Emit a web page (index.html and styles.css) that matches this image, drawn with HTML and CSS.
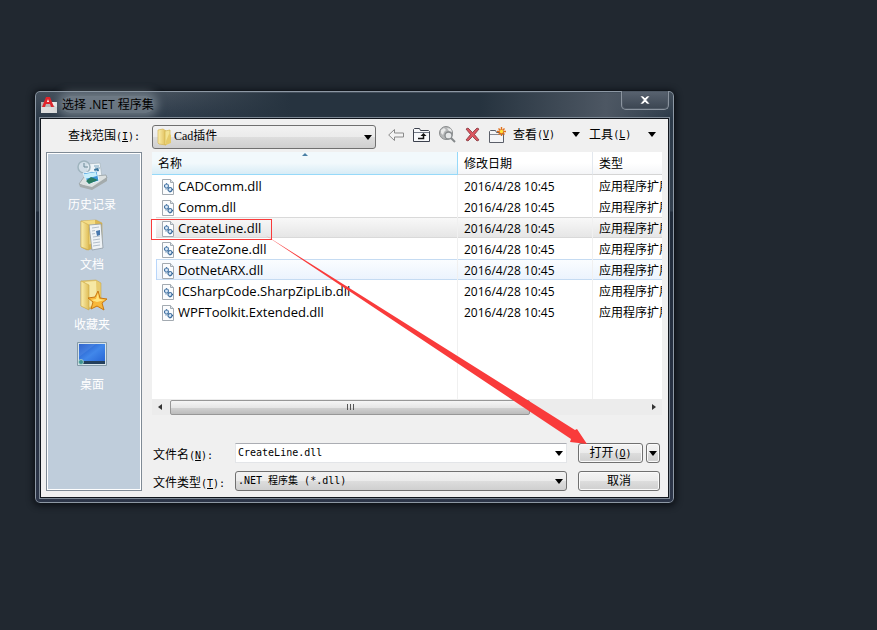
FILE: index.html
```html
<!DOCTYPE html>
<html lang="zh-CN">
<head>
  <meta charset="UTF-8" />
  <meta name="viewport" content="width=device-width, initial-scale=1.0"/>
  <title>选择 .NET 程序集</title>
  <link rel="stylesheet" href="styles.css">
</head>
<body>
  <!-- shared icons -->
  <svg class="defs" width="0" height="0" aria-hidden="true">
    <defs>
      <linearGradient id="folder-fill" x1="0" x2="1">
        <stop offset="0" stop-color="#fbefae"/>
        <stop offset="1" stop-color="#dfbd57"/>
      </linearGradient>
      <linearGradient id="screen-fill" x1="0" y1="0" x2="1" y2="1">
        <stop offset="0" stop-color="#1c4fc0"/>
        <stop offset="0.5" stop-color="#4187ea"/>
        <stop offset="1" stop-color="#2360d2"/>
      </linearGradient>
      <symbol id="dll" viewBox="0 0 14 16">
        <path d="M1.5 .5h8l3 3v12h-11z" fill="#fbfcfd" stroke="#a3aab1"/>
        <path d="M9.500 .5v3h3" fill="#dfe5ea" stroke="#a3abb2"/>
        <circle cx="5.500" cy="7" r="2" fill="#dbe9f8" stroke="#5b86b0" stroke-width="1.200"/>
        <circle cx="9" cy="10.500" r="2" fill="#dbe9f8" stroke="#41719f" stroke-width="1.200"/>
        <path d="M3 7h1M5.500 4.300v1M7 8.500l1 1M9 12.500v1M11 10.500h1M5 9.500v1" stroke="#2f6095"/>
      </symbol>
    </defs>
  </svg>

  <div class="dialog" role="dialog" aria-labelledby="dialog-title">
    <div class="titlebar">
      <svg width="16" height="16" viewBox="0 0 16 16">
        <path d="M0 5h16v11H0z" fill="#b9b9b9"/>
        <path d="M8 5h8v6z" fill="#f4f4f4"/>
        <path d="M0 10h16v6H0z" fill="#dedede"/>
        <path d="M1 10L5 0h4l4 10h-3l-1-3H5l-1 3z" fill="#e0242b"/>
        <path d="M6 5l1-3 1 3z" fill="#fff"/>
      </svg>
      <h1 id="dialog-title"><span>选择 .NET 程序集</span></h1>
      <button class="close" type="button" aria-label="关闭">
        <svg width="12" height="10" viewBox="0 0 12 10">
          <path d="M1 1h3l2 2 2-2h3L7.500 5 11 9H8L6 7 4 9H1l3.500-4z" fill="#fff" stroke="#454c57" stroke-width=".6"/>
        </svg>
      </button>
    </div>

    <form class="client">
      <div class="toolbar">
        <label for="look-in">查找范围<span class="latin">(<u>I</u>):</span></label>
        <div class="combo look-in">
          <svg width="16" height="18" viewBox="0 0 16 18">
            <path d="M1 2l5-1 3 2v14l-7-1-1-1z" fill="url(#folder-fill)" stroke="#d5b553" stroke-width=".7"/>
            <path d="M8 3l5-1v12l-5 3z" fill="#f3e392" stroke="#d3b650" stroke-width=".7"/>
            <path d="M12 6l2 1v8l-5 2v-4z" fill="#e6cb6a"/>
          </svg>
          <select id="look-in"><option>Cad插件</option></select>
        </div>
        <div class="tools">
          <button type="button" aria-label="后退">
            <svg width="16" height="14" viewBox="0 0 16 14"><path d="M.7 7L6.500 1.500V5h9v4h-9v3.500z" fill="#f4f4f4" stroke="#8b8b8b"/></svg>
          </button>
          <button type="button" aria-label="向上">
            <svg width="17" height="14" viewBox="0 0 17 14">
              <path d="M.5 13.500V1.500l1-1h5l1 2h8l1 1v10z" fill="#f7f8fa" stroke="#3c414d"/>
              <path d="M1 4.500h15" stroke="#747b88"/>
              <path d="M5 10.500h5.500V7" fill="none" stroke="#111" stroke-width="1.500"/>
              <path d="M7.500 8l3-3 3 3z" fill="#111"/>
            </svg>
          </button>
          <button type="button" aria-label="搜索 Web">
            <svg width="17" height="17" viewBox="0 0 17 17">
              <circle cx="7" cy="7" r="6.500" fill="#b5b7b8" stroke="#8a8d8e"/>
              <path d="M2 4l3-2 2 2-2 2-1 3-2-2zM8 2l4 1 1 3-3-1z" fill="#e9eaea"/>
              <circle cx="9.500" cy="9.500" r="3.500" fill="#e6e8e9" stroke="#85898b" stroke-width="1.300"/>
              <path d="M12 12l4 4" stroke="#85898b" stroke-width="2"/>
            </svg>
          </button>
          <button type="button" aria-label="删除">
            <svg width="15" height="15" viewBox="0 0 15 15"><path d="M1 2l2-1 4.500 4.500L12 1l2 1-4.500 5.500L14 13l-2 1-4.500-4.500L3 14l-2-1 4.500-5.500z" fill="#dc5660" stroke="#83343b" stroke-width=".8"/></svg>
          </button>
          <button type="button" aria-label="新建文件夹">
            <svg width="18" height="16" viewBox="0 0 18 16">
              <path d="M.5 15.500v-11l1-1h5l1 2h7v10z" fill="#f4f5f7" stroke="#5b5f69"/>
              <path d="M1 7.500h13" stroke="#878c96"/>
              <path d="M12.500 0v9M8 4.500h9M9.500 1.500l6 6M15.500 1.500l-6 6" stroke="#e0701c" stroke-width="1.400"/>
              <circle cx="12.500" cy="4.500" r="1.700" fill="#ffe53b"/>
            </svg>
          </button>
          <button class="menu" type="button">查看<span class="latin">(<u>V</u>)</span><i class="arrow"></i></button>
          <button class="menu" type="button">工具<span class="latin">(<u>L</u>)</span><i class="arrow"></i></button>
        </div>
      </div>

      <nav class="places">
        <a href="#history">
          <svg width="32" height="32" viewBox="0 0 32 32">
            <path d="M10 5l14-1 2 14-14 2z" fill="#eef4f8" stroke="#a8b6bf" stroke-width=".7"/>
            <path d="M18 7h5M19 9h5M18 11h5" stroke="#78a2bd"/>
            <path d="M18 10l4-1 1 3-4 1z" fill="#3b759c"/>
            <circle cx="8" cy="8" r="6" fill="#d8e6ee" fill-opacity=".7" stroke="#9fb4be" stroke-width="1.500"/>
            <path d="M8 4v4h4" fill="none" stroke="#6b8996"/>
            <path d="M3 25l5-7 22-2 1 3-15 11z" fill="#dce1e1" stroke="#8f989b" stroke-width=".7"/>
            <path d="M3 25l13 3 15-10v4L16 31 4 28z" fill="#a4abac"/>
            <path d="M7 14l14-2 2 10-11 3z" fill="#3b94d8" stroke="#ecf6fc"/>
            <path d="M8 15l12-2 1 4-12 3z" fill="#c8effc"/>
            <path d="M10 22l5-4 7 3-9 4z" fill="#297b61"/>
          </svg>
          历史记录
        </a>
        <a href="#documents">
          <svg width="32" height="32" viewBox="0 0 32 32">
            <path d="M5 2l15-1 6 3v23l-15 4-6-3z" fill="#dcb852" stroke="#c6a342" stroke-width=".5"/>
            <path d="M6 2l13-1 1 23-10 2z" fill="#f4dc85"/>
            <path d="M13 6l12-1 2 24-11 2z" fill="#eff3f6" stroke="#8f9aa4" stroke-width=".8"/>
            <path d="M16 9l7-1M16 12l3-.5M16 15l3-.5M17 18l7-1M17 21l7-1M17 24l7-1M17 27l7-1" stroke="#b3bfca"/>
            <path d="M20 12l4-1v5l-3 1z" fill="#4878ad"/>
            <path d="M5 2l8 4v25l-8-3z" fill="url(#folder-fill)" stroke="#caa74c" stroke-width=".6"/>
          </svg>
          文档
        </a>
        <a href="#favorites">
          <svg width="32" height="32" viewBox="0 0 32 32">
            <path d="M5 2l15-1 5 3v22l-13 4-7-3z" fill="#e7cb70" stroke="#c6a342" stroke-width=".5"/>
            <path d="M9 3l11-1 1 23-8 3z" fill="#f6e8a5"/>
            <path d="M5 2l8 4v25l-8-4z" fill="url(#folder-fill)" stroke="#caa74c" stroke-width=".6"/>
            <path d="M22 12l2 7 7 1-5 4 2 7-7-4-6 3 2-7-5-4 7-1z" fill="#f8b83b" stroke="#c97812"/>
            <path d="M22 14l1 6 6 1-8 2-6-2 5-1z" fill="#ffe681"/>
          </svg>
          收藏夹
        </a>
        <a href="#desktop">
          <svg width="32" height="32" viewBox="0 0 32 32">
            <path d="M1.500 3.500h29v23h-29z" fill="#d6e3ea" stroke="#8499a7"/>
            <path d="M3 5h26v20H3z" fill="url(#screen-fill)"/>
            <path d="M3 5h17L3 18z" fill="#75a9f2" fill-opacity=".25"/>
            <path d="M3 22h26v3H3z" fill="#243f5b"/>
            <circle cx="5" cy="23" r="2.500" fill="#3e9292" stroke="#bde1d8" stroke-width=".7"/>
          </svg>
          桌面
        </a>
      </nav>

      <div class="main">
        <div class="list">
          <table>
            <colgroup><col class="col-name"><col class="col-date"><col></colgroup>
            <thead>
              <tr><th class="sorted">名称</th><th>修改日期</th><th>类型</th></tr>
            </thead>
            <tbody>
              <tr><td><svg class="file"><use href="#dll"/></svg>CADComm.dll</td><td>2016/4/28 10:45</td><td>应用程序扩展</td></tr>
              <tr><td><svg class="file"><use href="#dll"/></svg>Comm.dll</td><td>2016/4/28 10:45</td><td>应用程序扩展</td></tr>
              <tr class="selected"><td><svg class="file"><use href="#dll"/></svg>CreateLine.dll</td><td>2016/4/28 10:45</td><td>应用程序扩展</td></tr>
              <tr><td><svg class="file"><use href="#dll"/></svg>CreateZone.dll</td><td>2016/4/28 10:45</td><td>应用程序扩展</td></tr>
              <tr class="hover"><td><svg class="file"><use href="#dll"/></svg>DotNetARX.dll</td><td>2016/4/28 10:45</td><td>应用程序扩展</td></tr>
              <tr><td><svg class="file"><use href="#dll"/></svg>ICSharpCode.SharpZipLib.dll</td><td>2016/4/28 10:45</td><td>应用程序扩展</td></tr>
              <tr><td><svg class="file"><use href="#dll"/></svg>WPFToolkit.Extended.dll</td><td>2016/4/28 10:45</td><td>应用程序扩展</td></tr>
              <tr class="filler"><td></td><td></td><td></td></tr>
            </tbody>
          </table>
        </div>
        <div class="scrollbar">
          <i class="left"></i>
          <div class="track"><div class="thumb"><i></i><i></i><i></i></div></div>
          <i class="right"></i>
        </div>

        <div class="fields">
          <label for="file-name">文件名<span class="latin">(<u>N</u>):</span></label>
          <div class="combo plain"><input id="file-name" type="text" value="CreateLine.dll"></div>
          <div class="split">
            <button class="btn" type="button">打开<span class="latin">(<u>O</u>)</span></button>
            <button class="btn drop" type="button" aria-label="打开选项"><i class="arrow"></i></button>
          </div>
          <label for="file-type">文件类型<span class="latin">(<u>T</u>):</span></label>
          <div class="combo"><select id="file-type"><option>.NET 程序集 (*.dll)</option></select></div>
          <button class="btn" type="button">取消</button>
        </div>
      </div>

      <!-- red callout from the selected file to the open button -->
      <svg class="callout" width="560" height="340" viewBox="0 0 560 340">
        <path fill-rule="evenodd" d="M110 100h121v21H110zM111 101v19h119v-19z"/>
        <path d="M224 116L534 311 536 310 546 325 529 323 530 320z"/>
      </svg>
    </form>
  </div>
</body>
</html>
```
FILE: styles.css
```css
* {
  margin: 0;
  padding: 0;
  box-sizing: border-box;
}

body {
  min-height: 100vh;
  background: #212830;
  padding: 90px 202px 24px 34px;
  font-family: "Open Sans", "Noto Sans CJK SC", sans-serif;
  font-size: 12px;
  line-height: 16px;
  color: #000;
}

.defs {
  position: absolute;
}

svg {
  flex: none;
}

button,
input,
select {
  font: inherit;
  color: inherit;
}

.dialog {
  min-width: 641px;
  padding: 0 5px 5px;
  border: 1px solid #11161c;
  border-radius: 6px;
  background: linear-gradient(#45505c, #2c3a49 28px, #33404f 120px, #202b3a 121px, #2c3548);
  box-shadow: inset 0 0 0 1px #8d98a4, 0 1px 6px 1px #0d1117;
}

.titlebar {
  display: flex;
  align-items: center;
  gap: 5px;
  height: 27px;
  padding-left: 1px;
  background: linear-gradient(90deg, transparent 20%, #26333f 40%, #26333f 70%, #4d5763 90%, transparent);
  background-size: 100% 24px;
  background-position: 0 2px;
  background-repeat: no-repeat;
}

.titlebar h1 {
  flex: 1;
  font-size: 12px;
  font-weight: normal;
}

.titlebar h1 span {
  border-radius: 8px;
  background: rgba(140, 152, 161, 0.6);
  box-shadow: 0 0 8px 4px rgba(140, 152, 161, 0.6);
}

.close {
  align-self: flex-start;
  display: flex;
  align-items: center;
  justify-content: center;
  width: 48px;
  height: 19px;
  border: 1px solid #8b949f;
  border-top: 0;
  border-radius: 0 0 5px 5px;
  background: linear-gradient(#596370, #3b4551);
  box-shadow: inset 0 0 0 1px #4f5965;
}

.client {
  position: relative;
  display: grid;
  grid-template-columns: 96px 1fr;
  grid-template-rows: 28px auto;
  column-gap: 10px;
  padding: 5px 6px 6px 5px;
  border: 1px solid #10151c;
  background: #f0f0f0;
  box-shadow: 0 0 0 1px #7d8894;
}

.latin {
  font-family: "DejaVu Sans Mono", monospace;
  font-size: 10px;
}

/* toolbar */

.toolbar {
  grid-column: 1 / -1;
  display: flex;
  align-items: center;
  padding: 0 4px 3px 22px;
}

.toolbar label {
  width: 84px;
}

.combo {
  position: relative;
  height: 20px;
}

.combo::after,
.arrow {
  border: 4px solid transparent;
  border-top: 5px solid #000;
  border-bottom: 0;
}

.combo::after {
  content: "";
  position: absolute;
  right: 4px;
  top: 8px;
  pointer-events: none;
}

.combo select,
.combo input {
  display: block;
  width: 100%;
  height: 100%;
  padding: 0 16px 0 2px;
  font-family: "DejaVu Sans Mono", "Noto Sans CJK SC", monospace;
  font-size: 10px;
}

.combo select {
  appearance: none;
  border: 1px solid #707070;
  border-radius: 3px;
  background: linear-gradient(#f2f2f2, #ebebeb 50%, #dddddd 51%, #cfcfcf);
}

.combo input {
  padding-bottom: 2px;
  border: 1px solid #e3e5e8;
  border-top-color: #abadb3;
  background: #fff;
}

.look-in {
  width: 224px;
  height: 24px;
}

.look-in svg {
  position: absolute;
  left: 5px;
  top: 3px;
}

.look-in select {
  padding: 0 16px 2px 21px;
  font-size: 12px;
  font-family: "Liberation Serif", "Noto Sans CJK SC", serif;
}

.look-in::after {
  top: 10px;
}

.tools {
  flex: 1;
  display: flex;
  align-items: center;
  gap: 9px;
  padding: 0 0 4px 12px;
}

.tools button {
  display: flex;
  align-items: center;
  border: 0;
  background: none;
}

.tools .menu {
  margin-left: -3px;
}

.tools .menu + .menu {
  margin-left: 0;
}

.menu .arrow {
  margin-left: 17px;
}

/* places bar */

.places {
  border: 1px solid #7f8a95;
  box-shadow: inset 0 0 0 1px #fff;
  background: #bfcddb;
  padding: 6px 4px 6px 0;
}

.places a {
  display: flex;
  flex-direction: column;
  align-items: center;
  gap: 6px;
  height: 60px;
  color: #fff;
  text-decoration: none;
}

/* file list */

.main {
  min-width: 0;
}

.list {
  height: 247px;
  overflow: hidden;
  background: #fff;
}

table {
  width: 100%;
  height: 100%;
  table-layout: fixed;
  border-spacing: 0;
}

.col-name {
  width: 306px;
}

.col-date {
  width: 135px;
}

th {
  position: relative;
  height: 23px;
  padding: 2px 6px 0;
  border-right: 1px solid #e3e8ee;
  border-bottom: 1px solid #d5d5d5;
  background: linear-gradient(#fff 50%, #f4f5f7);
  font-weight: normal;
  text-align: left;
}

th.sorted {
  border-color: #96d9f9;
  background: linear-gradient(#f2f9fc 50%, #d8ecf6);
}

th.sorted::after {
  content: "";
  position: absolute;
  left: 50%;
  top: 1px;
  margin-left: -3px;
  border: 3px solid transparent;
  border-top: 0;
  border-bottom-color: #4a80a5;
}

td {
  height: 21px;
  padding: 2px 6px 0;
  border-right: 1px solid #f0f0f0;
  overflow: hidden;
  white-space: nowrap;
}

th:last-child,
td:last-child {
  padding-right: 0;
  border-right: 0;
}

td:first-child {
  padding-left: 5px;
  border-left: 4px solid transparent;
  background-clip: padding-box;
  font-size: 13px;
}

.filler td {
  height: auto;
}

.file {
  width: 14px;
  height: 16px;
  margin-right: 3px;
  vertical-align: middle;
}

.selected td {
  background-image: linear-gradient(#f9f9f9, #e5e5e5);
  box-shadow: inset 0 1px #d9d9d9, inset 0 -1px #d9d9d9;
}

.hover td {
  background-image: linear-gradient(#fbfdff, #ebf3fd);
  box-shadow: inset 0 1px #c5dbf2, inset 0 -1px #c5dbf2;
}

.hover td:first-child {
  box-shadow: inset 1px 0 #b8d6fb, inset 0 1px #c5dbf2, inset 0 -1px #c5dbf2;
}

/* scrollbar */

.scrollbar {
  display: flex;
  align-items: center;
  gap: 8px;
  height: 16px;
  padding: 0 6px;
  background: #ececec;
}

.scrollbar .left,
.scrollbar .right {
  border: 3px solid transparent;
}

.scrollbar .left {
  border-left: 0;
  border-right: 4px solid #333;
}

.scrollbar .right {
  border-right: 0;
  border-left: 4px solid #333;
}

.track {
  flex: 1;
}

.thumb {
  display: flex;
  align-items: center;
  justify-content: center;
  gap: 2px;
  width: 76%;
  height: 15px;
  border: 1px solid #979797;
  border-radius: 2px;
  background: linear-gradient(#f5f5f5, #e6e6e6 50%, #d2d2d2 51%, #bcbcbc);
}

.thumb i {
  width: 1px;
  height: 6px;
  background: #555;
}

/* file name and type */

.fields {
  display: grid;
  grid-template-columns: 72px 1fr 82px;
  grid-auto-rows: 20px;
  gap: 8px 11px;
  align-items: center;
  padding: 28px 2px 0 0;
}

.fields label {
  padding: 4px 0 0 1px;
  white-space: nowrap;
}

.split {
  display: flex;
  gap: 3px;
}

.split .btn:first-child {
  flex: 1;
}

.btn {
  height: 20px;
  border: 1px solid #707070;
  border-radius: 3px;
  background: linear-gradient(#f4f4f4, #ebebeb 50%, #dddddd 51%, #cfcfcf);
  box-shadow: inset 0 0 0 1px #fafafa;
  line-height: 16px;
}

.drop {
  display: flex;
  align-items: center;
  justify-content: center;
  width: 14px;
}

/* callout */

.callout {
  position: absolute;
  left: 0;
  top: 0;
  fill: #f93b3b;
  pointer-events: none;
}
```
